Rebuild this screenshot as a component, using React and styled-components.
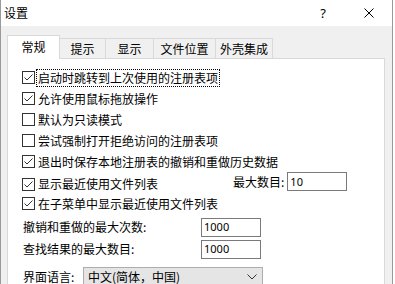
import styled, { createGlobalStyle } from "styled-components"

const GlobalStyle = createGlobalStyle`
    html, body {
        margin: 0;
        padding: 0;
        background: #ffffff;
    }
    body {
        font-family: "Noto Sans CJK SC", "Noto Sans", sans-serif;
        font-size: 12px;
        color: #000;
    }
`

const Window = styled.div`
    width: 391px;
    height: 284px;
    overflow: hidden;
    background: #f0f0f0;
    border-left: 1px solid #9a9a9a;
    border-right: 1px solid #9a9a9a;
`

const TitleBar = styled.div`
    height: 26px;
    background: #ffffff;
    display: flex;
    align-items: center;
    padding-left: 3px;
    line-height: 16px;
`

const TitleText = styled.span`
    flex: 1;
    font-size: 12px;
`

const TitleButton = styled.div`
    width: ${(p) => p.$w}px;
    height: 26px;
    display: flex;
    align-items: center;
    justify-content: center;
    font-family: "Noto Sans", sans-serif;
    font-size: 13px;
`

const Body = styled.div`
    padding: 9px 7px 0 6px;
`

const TabStrip = styled.div`
    display: flex;
    align-items: flex-end;
    height: 24px;
    position: relative;
    z-index: 1;
`

const Tab = styled.div`
    width: ${(p) => p.$w}px;
    height: ${(p) => (p.$active ? 24 : 21)}px;
    box-sizing: border-box;
    display: flex;
    align-items: center;
    justify-content: center;
    background: ${(p) => (p.$active ? "#ffffff" : "#f0f0f0")};
    border: 1px solid #d9d9d9;
    border-bottom: ${(p) => (p.$active ? "none" : "1px solid #d9d9d9")};
    margin-left: -1px;
    line-height: 16px;
    padding-bottom: ${(p) => (p.$active ? 1 : 0)}px;
    &:first-child {
        margin-left: 0;
    }
`

const Panel = styled.div`
    margin-top: -1px;
    background: #ffffff;
    border: 1px solid #d9d9d9;
    height: 260px;
    padding: 8px 0 0 14px;
    box-sizing: border-box;
`

const CheckRow = styled.div`
    height: 21px;
    display: grid;
    grid-template-columns: 13px auto 1fr ${(p) => (p.$side ? "121px 30px" : "")};
    align-items: center;
    line-height: 16px;
`

const Box = styled.span`
    width: 13px;
    height: 13px;
    box-sizing: border-box;
    border: 1px solid #333333;
    background: #ffffff;
    display: inline-flex;
`

const Label = styled.span`
    margin-left: 2px;
    padding: 0 1px;
    white-space: nowrap;
    outline: ${(p) => (p.$focus ? "1px dotted #000" : "none")};
    outline-offset: 0;
`

const SideGroup = styled.div`
    grid-column: 4;
    margin-bottom: 5px;
    display: flex;
    align-items: center;
    gap: 3px;
`

const FormRow = styled.div`
    height: 22px;
    display: flex;
    align-items: center;
    margin-top: ${(p) => p.$mt || 0}px;
    line-height: 16px;
    padding-left: 1px;
`

const FieldLabel = styled.span`
    width: ${(p) => p.$w}px;
    flex-shrink: 0;
    white-space: nowrap;
`

const Input = styled.div`
    width: 60px;
    height: 19px;
    flex-shrink: 0;
    box-sizing: border-box;
    border: 1px solid #7a7a7a;
    background: #fff;
    display: flex;
    align-items: center;
    padding-left: 2px;
    font-family: "Noto Sans", sans-serif;
    font-size: 11px;
`

const Select = styled.div`
    width: 180px;
    height: 21px;
    box-sizing: border-box;
    border: 1px solid #adadad;
    background: #e5e5e5;
    display: flex;
    align-items: center;
    justify-content: space-between;
    padding: 0 5px 0 4px;
`

const Checkbox = ({ checked }) => (
    <Box>
        {checked && (
            <svg width="11" height="11" viewBox="0 0 11 11">
                <path d="M1.5 5.5 L4 8 L9.5 2.5" fill="none" stroke="#333" strokeWidth="1" />
            </svg>
        )}
    </Box>
)

const options = [
    { text: "启动时跳转到上次使用的注册表项", checked: true, focus: true },
    { text: "允许使用鼠标拖放操作", checked: true },
    { text: "默认为只读模式", checked: false },
    { text: "尝试强制打开拒绝访问的注册表项", checked: false },
    { text: "退出时保存本地注册表的撤销和重做历史数据", checked: true },
    { text: "显示最近使用文件列表", checked: true, side: true },
    { text: "在子菜单中显示最近使用文件列表", checked: true },
]

const tabs = [
    { name: "常规", w: 53, active: true },
    { name: "提示", w: 47 },
    { name: "显示", w: 49 },
    { name: "文件位置", w: 63 },
    { name: "外壳集成", w: 58 },
]

const App = () => {
    return (
        <>
            <GlobalStyle />
            <Window>
                <TitleBar>
                    <TitleText>设置</TitleText>
                    <TitleButton $w={46}>?</TitleButton>
                    <TitleButton $w={46}>
                        <svg width="10" height="10" viewBox="0 0 10 10">
                            <path d="M0.5 0.5 L9.5 9.5 M9.5 0.5 L0.5 9.5" stroke="#000" strokeWidth="1" />
                        </svg>
                    </TitleButton>
                </TitleBar>
                <Body>
                    <TabStrip>
                        {tabs.map((t) => (
                            <Tab key={t.name} $w={t.w} $active={t.active}>
                                {t.name}
                            </Tab>
                        ))}
                    </TabStrip>
                    <Panel>
                        {options.map((o) => (
                            <CheckRow key={o.text} $side={o.side}>
                                <Checkbox checked={o.checked} />
                                <Label $focus={o.focus}>{o.text}</Label>
                                {o.side && (
                                    <SideGroup>
                                        <span>最大数目:</span>
                                        <Input>10</Input>
                                    </SideGroup>
                                )}
                            </CheckRow>
                        ))}
                        <FormRow $mt={2}>
                            <FieldLabel $w={178}>撤销和重做的最大次数:</FieldLabel>
                            <Input>1000</Input>
                        </FormRow>
                        <FormRow>
                            <FieldLabel $w={178}>查找结果的最大数目:</FieldLabel>
                            <Input>1000</Input>
                        </FormRow>
                        <FormRow $mt={6}>
                            <FieldLabel $w={60}>界面语言:</FieldLabel>
                            <Select>
                                <span>中文(简体，中国)</span>
                                <svg width="10" height="6" viewBox="0 0 10 6">
                                    <path d="M0.5 0.5 L5 5 L9.5 0.5" fill="none" stroke="#333" strokeWidth="1" />
                                </svg>
                            </Select>
                        </FormRow>
                    </Panel>
                </Body>
            </Window>
        </>
    )
}

export default App
